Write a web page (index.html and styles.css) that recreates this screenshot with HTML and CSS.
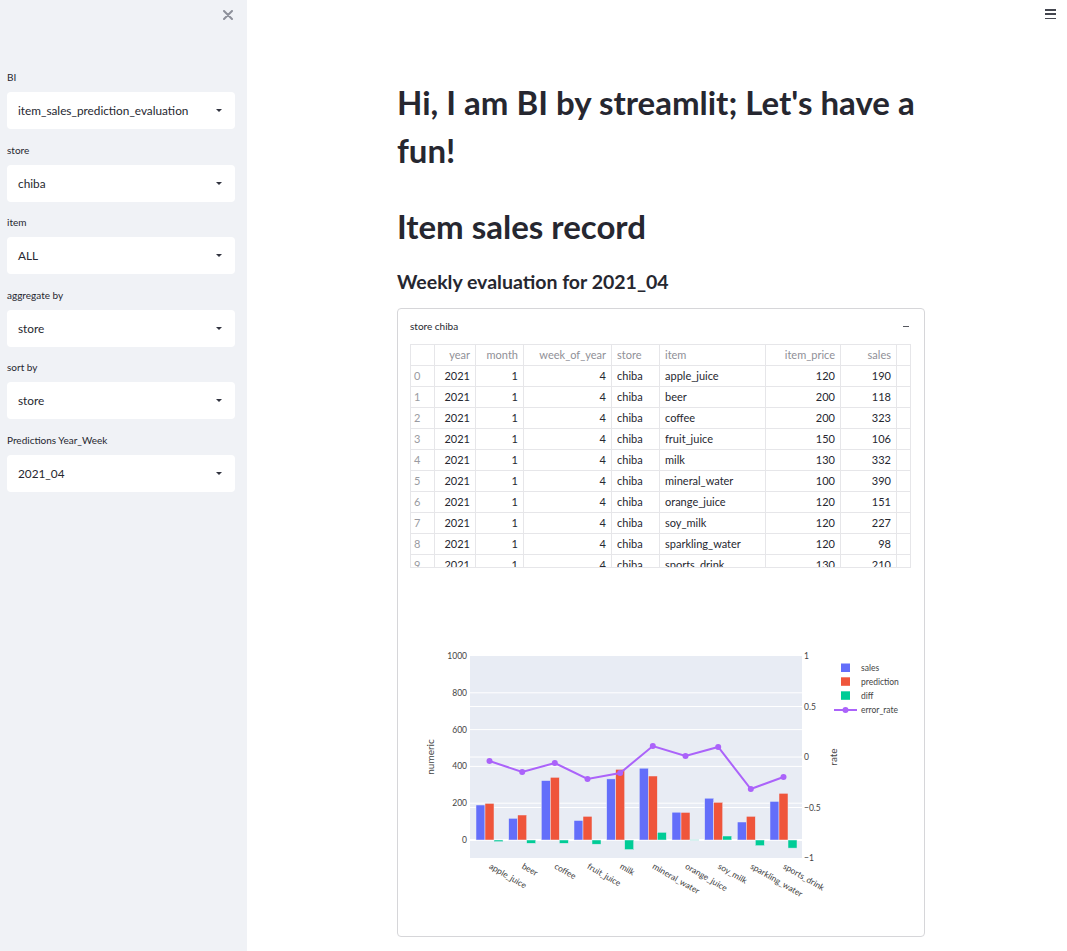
FILE: index.html
```html
<!DOCTYPE html>
<html>
<head>
<meta charset="utf-8">
<link rel="stylesheet" href="styles.css">
</head>
<body>
<aside class="sidebar">
  <div class="sb-head">
    <svg class="close" width="10" height="10" viewBox="0 0 10 10"><path d="M1 1L9 9M9 1L1 9" stroke="#8d909a" stroke-width="2" stroke-linecap="round"/></svg>
  </div>
  <div class="widgets">
    <div class="widget"><div class="label">BI</div><div class="select"><span>item_sales_prediction_evaluation</span><i class="caret"></i></div></div>
    <div class="widget"><div class="label">store</div><div class="select"><span>chiba</span><i class="caret"></i></div></div>
    <div class="widget"><div class="label">item</div><div class="select"><span>ALL</span><i class="caret"></i></div></div>
    <div class="widget"><div class="label">aggregate by</div><div class="select"><span>store</span><i class="caret"></i></div></div>
    <div class="widget"><div class="label">sort by</div><div class="select"><span>store</span><i class="caret"></i></div></div>
    <div class="widget"><div class="label">Predictions Year_Week</div><div class="select"><span>2021_04</span><i class="caret"></i></div></div>
  </div>
</aside>
<main class="main">
  <div class="topbar"><div class="burger"><i></i><i></i><i></i></div></div>
  <div class="content">
    <h1>Hi, I am BI by streamlit; Let's have a fun!</h1>
    <h2>Item sales record</h2>
    <h3>Weekly evaluation for 2021_04</h3>
    <div class="exp">
      <div class="exp-head"><span>store chiba</span><i class="minus"></i></div>
      <div class="tbl-wrap">
        <table class="tbl">
          <colgroup><col class="c0"><col class="c1"><col class="c2"><col class="c3"><col class="c4"><col class="c5"><col class="c6"><col class="c7"><col class="c8"></colgroup>
          <thead><tr><th></th><th class="r">year</th><th class="r">month</th><th class="r">week_of_year</th><th>store</th><th>item</th><th class="r">item_price</th><th class="r">sales</th><th></th></tr></thead>
          <tbody>
            <tr><td class="idx">0</td><td class="r">2021</td><td class="r">1</td><td class="r">4</td><td>chiba</td><td>apple_juice</td><td class="r">120</td><td class="r">190</td><td></td></tr>
            <tr><td class="idx">1</td><td class="r">2021</td><td class="r">1</td><td class="r">4</td><td>chiba</td><td>beer</td><td class="r">200</td><td class="r">118</td><td></td></tr>
            <tr><td class="idx">2</td><td class="r">2021</td><td class="r">1</td><td class="r">4</td><td>chiba</td><td>coffee</td><td class="r">200</td><td class="r">323</td><td></td></tr>
            <tr><td class="idx">3</td><td class="r">2021</td><td class="r">1</td><td class="r">4</td><td>chiba</td><td>fruit_juice</td><td class="r">150</td><td class="r">106</td><td></td></tr>
            <tr><td class="idx">4</td><td class="r">2021</td><td class="r">1</td><td class="r">4</td><td>chiba</td><td>milk</td><td class="r">130</td><td class="r">332</td><td></td></tr>
            <tr><td class="idx">5</td><td class="r">2021</td><td class="r">1</td><td class="r">4</td><td>chiba</td><td>mineral_water</td><td class="r">100</td><td class="r">390</td><td></td></tr>
            <tr><td class="idx">6</td><td class="r">2021</td><td class="r">1</td><td class="r">4</td><td>chiba</td><td>orange_juice</td><td class="r">120</td><td class="r">151</td><td></td></tr>
            <tr><td class="idx">7</td><td class="r">2021</td><td class="r">1</td><td class="r">4</td><td>chiba</td><td>soy_milk</td><td class="r">120</td><td class="r">227</td><td></td></tr>
            <tr><td class="idx">8</td><td class="r">2021</td><td class="r">1</td><td class="r">4</td><td>chiba</td><td>sparkling_water</td><td class="r">120</td><td class="r">98</td><td></td></tr>
            <tr><td class="idx">9</td><td class="r">2021</td><td class="r">1</td><td class="r">4</td><td>chiba</td><td>sports_drink</td><td class="r">130</td><td class="r">210</td><td></td></tr>
          </tbody>
        </table>
      </div>
      <svg class="chart" width="526" height="361" viewBox="398 575 526 361">
        <rect x="470" y="656" width="332" height="202" fill="#e8ecf4"/>
        <g stroke="#fff" stroke-width="1">
          <line x1="470" x2="802" y1="692.8" y2="692.8"/>
          <line x1="470" x2="802" y1="729.6" y2="729.6"/>
          <line x1="470" x2="802" y1="766.4" y2="766.4"/>
          <line x1="470" x2="802" y1="803.2" y2="803.2"/>
          <line x1="470" x2="802" y1="706.5" y2="706.5"/>
          <line x1="470" x2="802" y1="757" y2="757"/>
          <line x1="470" x2="802" y1="807.5" y2="807.5"/>
          <line x1="470" x2="802" y1="840" y2="840" stroke-width="2"/>
        </g>
        <g fill="#636efa" stroke="#e5ecf6" stroke-width="0.5">
          <rect x="476" y="805.0" width="9" height="35.0"/>
          <rect x="508.7" y="818.3" width="9" height="21.7"/>
          <rect x="541.3" y="780.6" width="9" height="59.4"/>
          <rect x="574" y="820.5" width="9" height="19.5"/>
          <rect x="606.7" y="778.9" width="9" height="61.1"/>
          <rect x="639.3" y="768.2" width="9" height="71.8"/>
          <rect x="672" y="812.2" width="9" height="27.8"/>
          <rect x="704.7" y="798.2" width="9" height="41.8"/>
          <rect x="737.3" y="822.0" width="9" height="18.0"/>
          <rect x="770" y="801.4" width="9" height="38.6"/>
        </g>
        <g fill="#ef553b" stroke="#e5ecf6" stroke-width="0.5">
          <rect x="485" y="803.4" width="9" height="36.6"/>
          <rect x="517.7" y="815.0" width="9" height="25.0"/>
          <rect x="550.3" y="777.3" width="9" height="62.7"/>
          <rect x="583" y="816.3" width="9" height="23.7"/>
          <rect x="615.7" y="769.3" width="9" height="70.7"/>
          <rect x="648.3" y="776.0" width="9" height="64.0"/>
          <rect x="681" y="812.4" width="9" height="27.6"/>
          <rect x="713.7" y="802.3" width="9" height="37.7"/>
          <rect x="746.3" y="816.3" width="9" height="23.7"/>
          <rect x="779" y="793.3" width="9" height="46.7"/>
        </g>
        <g fill="#00cc96" stroke="#e5ecf6" stroke-width="0.5">
          <rect x="494" y="840" width="9" height="1.7"/>
          <rect x="526.7" y="840" width="9" height="3.3"/>
          <rect x="559.3" y="840" width="9" height="3.3"/>
          <rect x="592" y="840" width="9" height="4.2"/>
          <rect x="624.7" y="840" width="9" height="9.6"/>
          <rect x="657.3" y="832.3" width="9" height="7.7"/>
          <rect x="690" y="839.8" width="9" height="0.4"/>
          <rect x="722.7" y="836.0" width="9" height="4.0"/>
          <rect x="755.3" y="840" width="9" height="5.7"/>
          <rect x="788" y="840" width="9" height="8.1"/>
        </g>
        <polyline fill="none" stroke="#ab63fa" stroke-width="2" points="489.5,761 522.2,772 554.8,763 587.5,779 620.2,773 652.8,746 685.5,756 718.2,747 750.8,789 783.5,777"/>
        <g fill="#ab63fa">
          <circle cx="489.5" cy="761" r="3"/><circle cx="522.2" cy="772" r="3"/><circle cx="554.8" cy="763" r="3"/><circle cx="587.5" cy="779" r="3"/><circle cx="620.2" cy="773" r="3"/>
          <circle cx="652.8" cy="746" r="3"/><circle cx="685.5" cy="756" r="3"/><circle cx="718.2" cy="747" r="3"/><circle cx="750.8" cy="789" r="3"/><circle cx="783.5" cy="777" r="3"/>
        </g>
        <g class="tick" text-anchor="end">
          <text x="467" y="659">1000</text>
          <text x="467" y="695.8">800</text>
          <text x="467" y="732.6">600</text>
          <text x="467" y="769.4">400</text>
          <text x="467" y="806.2">200</text>
          <text x="467" y="843">0</text>
        </g>
        <g class="tick">
          <text x="804" y="659">1</text>
          <text x="804" y="709.5">0.5</text>
          <text x="804" y="760">0</text>
          <text x="804" y="810.5">−0.5</text>
          <text x="804" y="861">−1</text>
        </g>
        <g class="tick">
          <text x="488.5" y="868" transform="rotate(30 488.5 868)">apple_juice</text>
          <text x="521.2" y="868" transform="rotate(30 521.2 868)">beer</text>
          <text x="553.8" y="868" transform="rotate(30 553.8 868)">coffee</text>
          <text x="586.5" y="868" transform="rotate(30 586.5 868)">fruit_juice</text>
          <text x="619.2" y="868" transform="rotate(30 619.2 868)">milk</text>
          <text x="651.8" y="868" transform="rotate(30 651.8 868)">mineral_water</text>
          <text x="684.5" y="868" transform="rotate(30 684.5 868)">orange_juice</text>
          <text x="717.2" y="868" transform="rotate(30 717.2 868)">soy_milk</text>
          <text x="749.8" y="868" transform="rotate(30 749.8 868)">sparkling_water</text>
          <text x="782.5" y="868" transform="rotate(30 782.5 868)">sports_drink</text>
        </g>
        <text class="axt" x="434" y="757" text-anchor="middle" transform="rotate(-90 434 757)">numeric</text>
        <text class="axt" x="837" y="757" text-anchor="middle" transform="rotate(-90 837 757)">rate</text>
        <rect x="841" y="663.5" width="9" height="8.5" fill="#636efa"/>
        <rect x="841" y="677.3" width="9" height="8.5" fill="#ef553b"/>
        <rect x="841" y="691.3" width="9" height="8.5" fill="#00cc96"/>
        <line x1="834" x2="857" y1="710" y2="710" stroke="#ab63fa" stroke-width="2"/>
        <circle cx="845.5" cy="710" r="3" fill="#ab63fa"/>
        <g class="leg">
          <text x="861" y="671.3">sales</text>
          <text x="861" y="685">prediction</text>
          <text x="861" y="699">diff</text>
          <text x="861" y="713">error_rate</text>
        </g>
      </svg>
    </div>
  </div>
</main>
</body>
</html>
```

FILE: styles.css
```css
* { box-sizing: border-box; }
html, body { margin: 0; padding: 0; }
body {
  display: flex;
  min-height: 951px;
  font-family: Lato, "Noto Sans", sans-serif;
  color: #262730;
  background: #fff;
}
.sidebar {
  width: 247px;
  flex: 0 0 247px;
  background: #f0f2f6;
  min-height: 951px;
}
.sb-head {
  height: 70px;
  display: flex;
  justify-content: flex-end;
  align-items: flex-start;
  padding: 10px 14px 0 0;
}
.close { display: block; }
.widgets {
  display: flex;
  flex-direction: column;
  gap: 13.5px;
  padding: 0 12px 0 7px;
}
.label {
  font-size: 10px;
  line-height: 14px;
  height: 14px;
  margin-bottom: 8px;
  color: #262730;
}
.select {
  height: 37px;
  background: #fff;
  border-radius: 4px;
  display: flex;
  align-items: center;
  justify-content: space-between;
  padding: 0 13px 0 11px;
  font-size: 11.8px;
  color: #262730;
}
.caret {
  width: 0;
  height: 0;
  border-left: 3px solid transparent;
  border-right: 3px solid transparent;
  border-top: 3.5px solid #31333f;
}
.main {
  flex: 1;
  display: flex;
  flex-direction: column;
}
.topbar {
  height: 24px;
  display: flex;
  justify-content: flex-end;
  padding: 9px 11px 0 0;
}
.burger {
  width: 11px;
  display: flex;
  flex-direction: column;
  gap: 2.8px;
}
.burger i {
  display: block;
  height: 1.5px;
  background: #44464f;
}
.content {
  width: 528px;
  margin-left: 150px;
}
h1 {
  margin: 53.7px 0 0;
  font-size: 33px;
  line-height: 48px;
  font-weight: 700;
}
h2 {
  margin: 32px 0 0;
  font-size: 33px;
  line-height: 40px;
  font-weight: 700;
}
h3 {
  margin: 22px 0 0;
  font-size: 19.5px;
  line-height: 28px;
  font-weight: 700;
}
.exp {
  margin-top: 12px;
  border: 1px solid #d6d6d9;
  border-radius: 4px;
  width: 528px;
}
.exp-head {
  height: 35px;
  display: flex;
  align-items: center;
  justify-content: space-between;
  padding: 0 15px 0 12px;
  font-size: 10px;
}
.minus {
  display: block;
  width: 6px;
  height: 1px;
  background: #55575f;
}
.tbl-wrap {
  margin: 0 13px 0 12px;
  height: 224px;
  overflow: hidden;
  border-bottom: 1px solid #e6e6e9;
}
.tbl {
  width: 500px;
  border-collapse: collapse;
  table-layout: fixed;
  font-size: 11px;
}
.c0 { width: 24px; } .c1 { width: 41px; } .c2 { width: 48px; } .c3 { width: 88px; }
.c4 { width: 48px; } .c5 { width: 106px; } .c6 { width: 75px; } .c7 { width: 56px; } .c8 { width: 14px; }
.tbl th, .tbl td {
  border: 1px solid #e6e6e9;
  height: 21px;
  padding: 0 5px;
  line-height: 19px;
  text-align: left;
  white-space: nowrap;
  overflow: hidden;
}
.tbl th {
  font-weight: 400;
  color: #8f9097;
}
.tbl td.idx { color: #9a9ba1; padding-left: 3px; }
.tbl .r { text-align: right; }
.chart {
  display: block;
  margin-top: 7px;
}
.tick { font-family: Lato, sans-serif; font-size: 8.5px; fill: #444; }
.axt { font-family: Lato, sans-serif; font-size: 10px; fill: #444; }
.leg { font-family: Lato, sans-serif; font-size: 8.5px; fill: #444; }
```
